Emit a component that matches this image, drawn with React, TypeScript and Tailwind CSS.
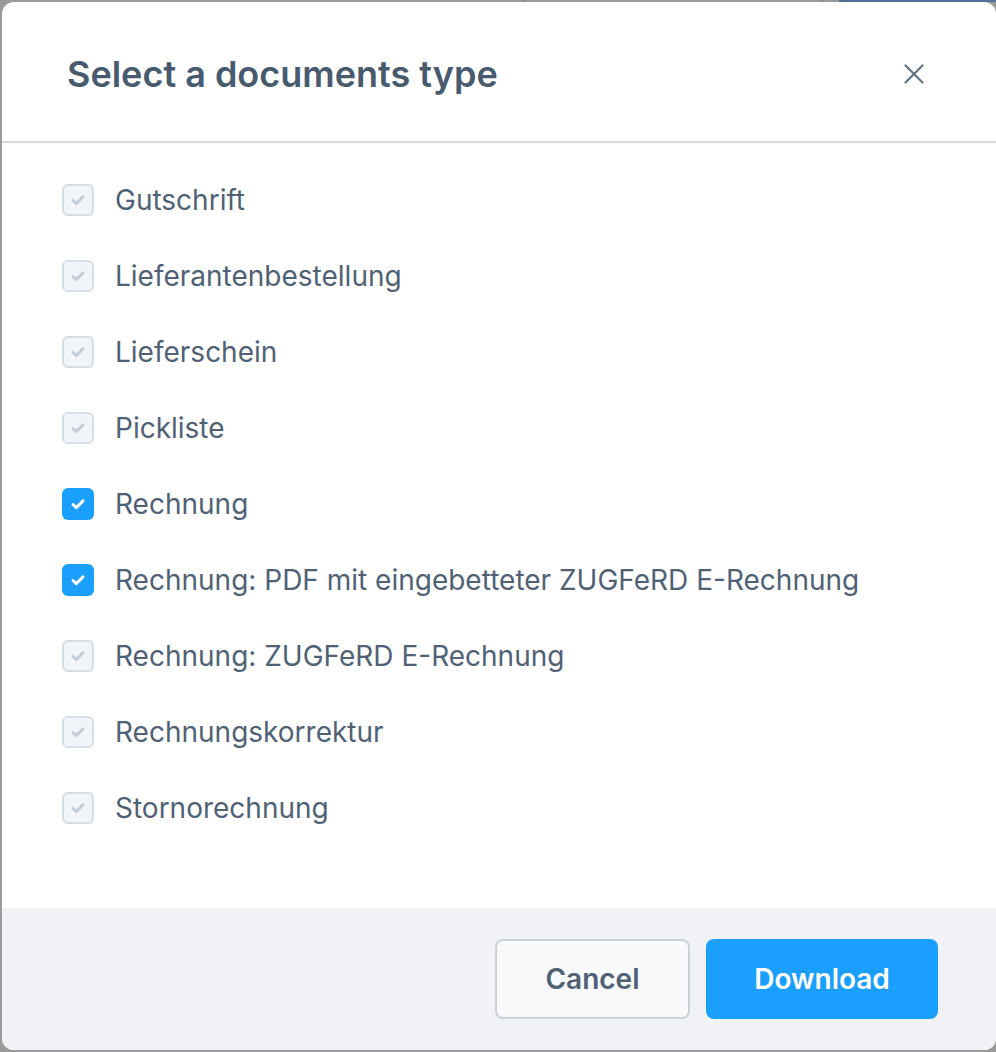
const docTypes = [
  { label: "Gutschrift", checked: false },
  { label: "Lieferantenbestellung", checked: false },
  { label: "Lieferschein", checked: false },
  { label: "Pickliste", checked: false },
  { label: "Rechnung", checked: true },
  { label: "Rechnung: PDF mit eingebetteter ZUGFeRD E-Rechnung", checked: true },
  { label: "Rechnung: ZUGFeRD E-Rechnung", checked: false },
  { label: "Rechnungskorrektur", checked: false },
  { label: "Stornorechnung", checked: false },
];

function CheckBox({ checked }: { checked: boolean }) {
  return (
    <div
      className={
        checked
          ? "w-8 h-8 rounded-[6px] bg-[#1a9fff] flex items-center justify-center"
          : "w-8 h-8 rounded-[6px] bg-[#f1f4f8] border-2 border-[#d5dde6] flex items-center justify-center"
      }
    >
      <svg viewBox="0 0 16 16" className="w-[18px] h-[18px]" fill="none">
        <path
          d="M3.6 8.4l2.9 2.8 5.9-6"
          stroke={checked ? "#ffffff" : "#c3ced9"}
          strokeWidth="2.6"
          strokeLinecap="round"
          strokeLinejoin="round"
        />
      </svg>
    </div>
  );
}

export default function App() {
  return (
    <div
      className="w-[996px] h-[1052px] bg-[#9a9a9a] overflow-hidden flex flex-col"
      style={{ fontFamily: "Inter, 'Noto Sans', sans-serif" }}
    >
      {/* Page behind the overlay */}
      <div className="h-[2px] flex shrink-0">
        <div className="w-[523px] bg-[#9a9a9a]" />
        <div className="w-px bg-[#7f7f7f]" />
        <div className="w-[298px] bg-[#9a9a9a]" />
        <div className="w-px bg-[#7f7f7f]" />
        <div className="w-[16px] bg-[#9a9a9a]" />
        <div className="flex-1 bg-[#4f7596]" />
      </div>

      {/* Modal */}
      <div className="ml-[2px] mb-[2px] w-[994px] flex-1 rounded-[12px] bg-white flex flex-col overflow-hidden">
        <div className="h-[141px] shrink-0 pt-1 pl-[65px] pr-[72px] flex items-center justify-between border-b-2 border-[#d3dce5]">
          <h2 className="text-[36px] font-semibold text-[#475a6e]">Select a documents type</h2>
          <button className="text-[#5f7387]">
            <svg viewBox="0 0 20 20" className="w-5 h-5" fill="none">
              <path d="M1.5 1.5l17 17M18.5 1.5l-17 17" stroke="currentColor" strokeWidth="2.2" strokeLinecap="round" />
            </svg>
          </button>
        </div>

        <div className="flex-1 pt-[19px] pl-[60px]">
          {docTypes.map((d) => (
            <label key={d.label} className="h-[76px] flex items-center gap-[21px]">
              <CheckBox checked={d.checked} />
              <span className="text-[28px] text-[#4f6275]">{d.label}</span>
            </label>
          ))}
        </div>

        <div className="h-[142px] shrink-0 bg-[#f0f2f5] flex items-center justify-end gap-4 pr-[58px]">
          <button className="w-[195px] h-[80px] rounded-[8px] bg-[#f8f9fb] border-2 border-[#c8d0da] text-[28px] font-semibold text-[#4f6275]">
            Cancel
          </button>
          <button className="w-[232px] h-[80px] rounded-[8px] bg-[#1a9fff] text-[28px] font-semibold text-white">
            Download
          </button>
        </div>
      </div>
    </div>
  );
}
